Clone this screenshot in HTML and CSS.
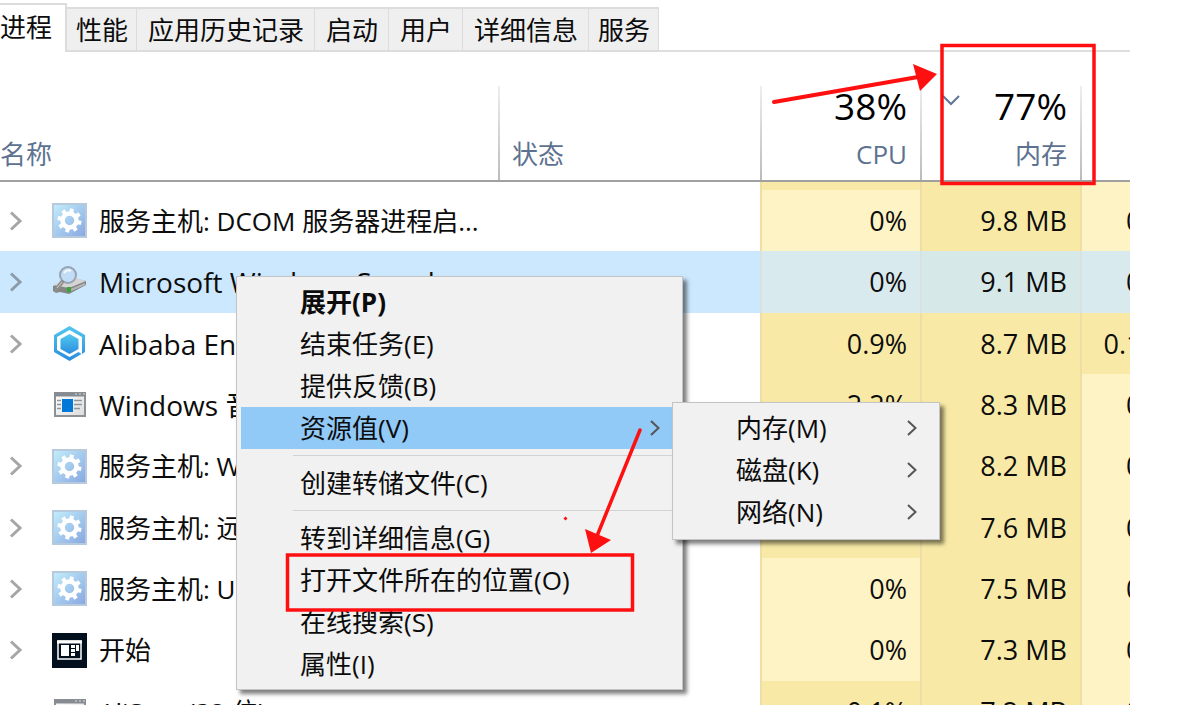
FILE: index.html
```html
<!DOCTYPE html>
<html lang="zh-CN">
<head>
<meta charset="utf-8">
<title>任务管理器</title>
<link rel="stylesheet" href="styles.css">
</head>
<body>
<svg width="0" height="0" class="defs" aria-hidden="true">
  <defs>
    <linearGradient id="gearBg" x1="0" y1="0" x2="1" y2="1"><stop offset="0" stop-color="#c4effb"/><stop offset="1" stop-color="#86a6e0"/></linearGradient>
    <linearGradient id="hexBg" x1="0" y1="0" x2="0" y2="1"><stop offset="0" stop-color="#52c8ee"/><stop offset="1" stop-color="#2b8de0"/></linearGradient>
    <linearGradient id="winBg" x1="0" y1="0" x2="1" y2="1"><stop offset="0" stop-color="#fff"/><stop offset="1" stop-color="#dcdcdc"/></linearGradient>
    <symbol id="gear" viewBox="0 0 35 35">
      <rect x="1" y="1" width="33" height="33" fill="url(#gearBg)" stroke="#b7c9dc" stroke-width="2"/>
      <circle cx="17.500" cy="17.500" r="7" fill="none" stroke="#fff" stroke-width="4.500"/>
      <g stroke="#fff" stroke-width="4">
        <path d="M17.500 5.500v5M17.500 24.500v5M5.500 17.500h5M24.500 17.500h5" transform="rotate(12 17.500 17.500)"/>
        <path d="M17.500 5.500v5M17.500 24.500v5M5.500 17.500h5M24.500 17.500h5" transform="rotate(57 17.500 17.500)"/>
      </g>
    </symbol>
    <symbol id="drive" viewBox="0 0 35 35">
      <path d="M1 21l20-8 13 3v4L17 29l-9-2-4 1-3-2z" fill="#858585"/>
      <path d="M1 20l20-8 13 4-17 7z" fill="#d4d4d4"/>
      <path d="M19 25l14-6" fill="none" stroke="#b5b5b5" stroke-width="2"/>
      <rect x="15" y="22" width="4" height="5" fill="#39a532"/>
      <circle cx="16" cy="10" r="8" fill="#c3dcf5" stroke="#97a3b0" stroke-width="2"/>
      <path d="M12 8q3-4 7-2" fill="none" stroke="#f4faff" stroke-width="2"/>
      <path d="M10 17l-6 8" stroke="#8d8d8d" stroke-width="4" stroke-linecap="round"/>
      <path d="M10 17l-5 6" stroke="#d0d0d0" stroke-width="1"/>
    </symbol>
    <symbol id="hex" viewBox="0 0 35 35">
      <path d="M17.500 0L33 9v17l-3 2V11L17.500 4 5 11v13l12.500 7 9-5 3 2-12 7L2 26V9z" fill="url(#hexBg)"/>
      <path d="M17.500 8l9 5v10l-9 5-9-5V13z" fill="url(#hexBg)"/>
    </symbol>
    <symbol id="win" viewBox="0 0 35 35">
      <rect x="3" y="6" width="30" height="23" fill="url(#winBg)" stroke="#8c9196" stroke-width="2"/>
      <path d="M2 7.500h32" stroke="#858b90" stroke-width="4"/>
      <path d="M23 7h2M27 7h2M31 7h2" stroke="#dadada" stroke-width="1"/>
      <rect x="10" y="12" width="11" height="13" fill="#0078d7"/>
      <path d="M5 13.500h4M5 17.500h4M5 21.500h4M22 13.500h8M22 17.500h8M22 21.500h6" stroke="#90959a" stroke-width="1.500"/>
    </symbol>
    <symbol id="blank" viewBox="0 0 35 35">
      <rect x="3" y="6" width="30" height="23" fill="url(#winBg)" stroke="#8c9196" stroke-width="2"/>
      <path d="M2 7.500h32" stroke="#858b90" stroke-width="4"/>
      <path d="M23 7h2M27 7h2M31 7h2" stroke="#dadada" stroke-width="1"/>
    </symbol>
    <symbol id="start" viewBox="0 0 35 35">
      <rect width="35" height="35" fill="#020f1c"/>
      <rect x="6" y="8" width="23" height="18" fill="none" stroke="#fff" stroke-width="1.500"/>
      <path d="M5 9h25" stroke="#fff" stroke-width="3"/>
      <rect x="9" y="12" width="8" height="11" fill="#fff"/>
      <path d="M19 13.500h4M19 17.500h4M19 21.500h4" stroke="#fff" stroke-width="3"/>
      <rect x="24" y="12" width="3" height="6" fill="#fff"/>
    </symbol>
    <symbol id="expand" viewBox="0 0 14 20"><path d="M2 1.500L11 10l-9 8.500" fill="none" stroke="currentColor" stroke-width="3"/></symbol>
    <symbol id="sub" viewBox="0 0 10 16"><path d="M1 1l7.500 7L1 15" fill="none" stroke="currentColor" stroke-width="2"/></symbol>
  </defs>
</svg>

<main class="window">
  <nav class="tabs" role="tablist">
    <button class="tab tab-active" role="tab" aria-selected="true">进程</button>
    <button class="tab tab-narrow" role="tab">性能</button>
    <button class="tab" role="tab">应用历史记录</button>
    <button class="tab" role="tab">启动</button>
    <button class="tab" role="tab">用户</button>
    <button class="tab" role="tab">详细信息</button>
    <button class="tab tab-narrow" role="tab">服务</button>
  </nav>

  <table class="processes">
    <colgroup><col><col class="col-status"><col class="col-value"><col class="col-value"><col class="col-disk"></colgroup>
    <thead>
      <tr>
        <th class="head-name">名称</th>
        <th class="head-status">状态</th>
        <th class="head-value"><span class="total">38%</span>CPU</th>
        <th class="head-value"><svg class="sort" viewBox="0 0 18 11"><path d="M1 1l8 8 8-8" fill="none" stroke="#5d7696" stroke-width="2"/></svg><span class="total">77%</span>内存</th>
        <th class="head-value"></th>
      </tr>
    </thead>
    <tbody>
      <tr class="strip"><td></td><td></td><td class="warm"></td><td class="warm"></td><td class="mild"></td></tr>
      <tr>
        <td><div class="name"><button class="toggle" aria-label="展开"><svg><use href="#expand"/></svg></button><svg class="icon"><use href="#gear"/></svg><span>服务主机: DCOM 服务器进程启...</span></div></td>
        <td></td><td class="mild">0%</td><td class="warm">9.8 MB</td><td class="mild"><span class="disk">0 MB/s</span></td>
      </tr>
      <tr class="selected">
        <td><div class="name"><button class="toggle" aria-label="展开"><svg><use href="#expand"/></svg></button><svg class="icon"><use href="#drive"/></svg><span class="latin">Microsoft Windows Search</span></div></td>
        <td></td><td class="mild">0%</td><td class="warm">9.1 MB</td><td class="mild"><span class="disk">0 MB/s</span></td>
      </tr>
      <tr>
        <td><div class="name"><button class="toggle" aria-label="展开"><svg><use href="#expand"/></svg></button><svg class="icon"><use href="#hex"/></svg><span class="latin">Alibaba Enterprise</span></div></td>
        <td></td><td class="warm">0.9%</td><td class="warm">8.7 MB</td><td class="warm"><span class="disk">0.1 MB/s</span></td>
      </tr>
      <tr>
        <td><div class="name"><span class="toggle"></span><svg class="icon"><use href="#win"/></svg><span class="latin">Windows 音频</span></div></td>
        <td></td><td class="warm">2.2%</td><td class="warm">8.3 MB</td><td class="mild"><span class="disk">0 MB/s</span></td>
      </tr>
      <tr>
        <td><div class="name"><button class="toggle" aria-label="展开"><svg><use href="#expand"/></svg></button><svg class="icon"><use href="#gear"/></svg><span>服务主机: W</span></div></td>
        <td></td><td class="warm"></td><td class="warm">8.2 MB</td><td class="mild"><span class="disk">0 MB/s</span></td>
      </tr>
      <tr>
        <td><div class="name"><button class="toggle" aria-label="展开"><svg><use href="#expand"/></svg></button><svg class="icon"><use href="#gear"/></svg><span>服务主机: 远</span></div></td>
        <td></td><td class="warm"></td><td class="warm">7.6 MB</td><td class="mild"><span class="disk">0 MB/s</span></td>
      </tr>
      <tr>
        <td><div class="name"><button class="toggle" aria-label="展开"><svg><use href="#expand"/></svg></button><svg class="icon"><use href="#gear"/></svg><span>服务主机: U</span></div></td>
        <td></td><td class="mild">0%</td><td class="warm">7.5 MB</td><td class="mild"><span class="disk">0 MB/s</span></td>
      </tr>
      <tr>
        <td><div class="name"><button class="toggle" aria-label="展开"><svg><use href="#expand"/></svg></button><svg class="icon"><use href="#start"/></svg><span>开始</span></div></td>
        <td></td><td class="mild">0%</td><td class="warm">7.3 MB</td><td class="mild"><span class="disk">0 MB/s</span></td>
      </tr>
      <tr>
        <td><div class="name"><span class="toggle"></span><svg class="icon"><use href="#blank"/></svg><span>AliServ (32 位)</span></div></td>
        <td></td><td class="warm">0.1%</td><td class="warm">7.2 MB</td><td class="mild"><span class="disk">0 MB/s</span></td>
      </tr>
    </tbody>
  </table>

  <div class="menu menu-main" role="menu">
    <button class="item item-default" role="menuitem">展开(P)</button>
    <button class="item" role="menuitem">结束任务(E)</button>
    <button class="item" role="menuitem">提供反馈(B)</button>
    <button class="item item-open" role="menuitem" aria-haspopup="true">资源值(V)<svg class="arrow"><use href="#sub"/></svg></button>
    <hr class="rule">
    <button class="item" role="menuitem">创建转储文件(C)</button>
    <hr class="rule">
    <button class="item" role="menuitem">转到详细信息(G)</button>
    <button class="item" role="menuitem">打开文件所在的位置(O)</button>
    <button class="item" role="menuitem">在线搜索(S)</button>
    <button class="item" role="menuitem">属性(I)</button>
  </div>

  <div class="menu menu-sub" role="menu">
    <button class="item" role="menuitem">内存(M)<svg class="arrow"><use href="#sub"/></svg></button>
    <button class="item" role="menuitem">磁盘(K)<svg class="arrow"><use href="#sub"/></svg></button>
    <button class="item" role="menuitem">网络(N)<svg class="arrow"><use href="#sub"/></svg></button>
  </div>

  <svg class="marks" width="1130" height="705" aria-hidden="true">
    <g fill="none" stroke="#ff1010">
      <rect x="942" y="45.500" width="152" height="138" stroke-width="3.500"/>
      <rect x="287.500" y="555" width="345" height="55" stroke-width="3.500"/>
      <path d="M774 102L918 77" stroke-width="4" stroke-linecap="round"/>
      <path d="M640 430L597 536" stroke-width="3.500" stroke-linecap="round"/>
    </g>
    <path d="M913 64l24 10-17 17zM585 529l26 11-20 13zM565.500 516.500l2 2-2 2-2-2z" fill="#ff1010"/>
  </svg>
</main>
</body>
</html>
```
FILE: styles.css
```css
* {
  box-sizing: border-box;
}

body {
  margin: 0;
  height: 100vh;
  padding: 0 54px 2px 0;
  overflow: hidden;
  background: #fff;
  color: #0c0c0c;
  font: 26px/36px "Open Sans", "Noto Sans CJK SC", sans-serif;
}

button {
  margin: 0;
  border: 0;
  background: none;
  color: inherit;
  font: inherit;
}

.defs {
  position: absolute;
}

.window {
  position: relative;
  height: 100%;
  overflow: hidden;
}

/* Tab strip */
.tabs {
  display: flex;
  align-items: flex-end;
  height: 52px;
  padding-top: 3px;
  box-shadow: inset 0 -2px #dedede;
}

.tab {
  height: 45px;
  padding: 0 10px 0 11px;
  border: solid #dcdcdc;
  border-width: 2px 1px 2px 0;
  background: #efefef;
  white-space: nowrap;
}

.tab-narrow {
  padding: 0 8px 0 9px;
}

.tab-active {
  height: 49px;
  padding: 0 13px 4px 0;
  border-width: 2px 2px 0 0;
  background: #fff;
}

/* Process table */
.processes {
  width: 100%;
  table-layout: fixed;
  border-collapse: separate;
  border-spacing: 0;
}

.col-status {
  width: 262px;
}

.col-value {
  width: 160px;
}

.col-disk {
  width: 50px;
}

th {
  height: 130px;
  padding: 0 0 8px;
  border-bottom: 2px solid #a0a0a0;
  color: #5d7290;
  font-weight: 400;
  text-align: left;
  vertical-align: bottom;
}

.head-status,
.head-value {
  background: linear-gradient(#eee, #bbb) left bottom / 2px 94px no-repeat;
}

.head-status {
  padding-left: 14px;
}

.head-value {
  position: relative;
  padding-right: 13px;
  text-align: right;
}

.total {
  display: block;
  margin-bottom: 8px;
  color: #000;
  font-size: 37px;
  line-height: 44px;
}

.sort {
  position: absolute;
  top: 43px;
  left: 22px;
  width: 18px;
  height: 11px;
}

td {
  height: 61px;
  padding: 0;
  overflow: hidden;
  white-space: nowrap;
}

tr:nth-child(3n) td {
  height: 62px;
}

.strip td {
  height: 8px;
}

.mild,
.warm {
  padding-right: 13px;
  border-left: 2px solid #eedda6;
  font-size: 27px;
  text-align: right;
}

.mild {
  background: #fef3c4;
}

.warm {
  background: #f8eaa6;
}

.selected td {
  background: #cce8ff;
}

.selected .mild {
  border-color: #d8e2e0;
  background: #d9eaee;
}

.selected .warm {
  border-color: #d8e2e0;
  background: #d6e8e8;
}

.disk {
  display: block;
  width: 131px;
}

.name {
  display: flex;
  align-items: center;
}

.latin {
  font-size: 28px;
}

.toggle {
  flex: none;
  width: 52px;
  height: 20px;
  padding: 0 0 0 9px;
  color: #a6a6a6;
  text-align: left;
}

.selected .toggle {
  color: #8b9cab;
}

.toggle svg {
  display: block;
  width: 14px;
  height: 20px;
}

.icon {
  flex: none;
  width: 35px;
  height: 35px;
  margin-right: 12px;
}

/* Context menus */
.menu {
  position: absolute;
  display: flex;
  flex-direction: column;
  padding: 4px;
  border: 1px solid #c4c4c4;
  background: #f1f1f1;
  box-shadow: 4px 4px 4px rgba(0, 0, 0, 0.5);
}

.menu-main {
  top: 276px;
  left: 236px;
  width: 447px;
}

.menu-sub {
  top: 402px;
  left: 672px;
  width: 268px;
  padding-bottom: 6px;
}

.item {
  display: flex;
  align-items: center;
  justify-content: space-between;
  height: 42px;
  padding: 0 18px 0 59px;
  text-align: left;
  white-space: nowrap;
}

.item-default {
  font-weight: 700;
}

.item-open {
  background: #91c9f7;
}

.arrow {
  width: 10px;
  height: 16px;
  color: #555;
}

.rule {
  width: 382px;
  height: 1px;
  margin: 6px 0 6px 52px;
  border: 0;
  background: #d2d2d2;
}

/* Red callouts */
.marks {
  position: absolute;
  top: 0;
  left: 0;
}
```
